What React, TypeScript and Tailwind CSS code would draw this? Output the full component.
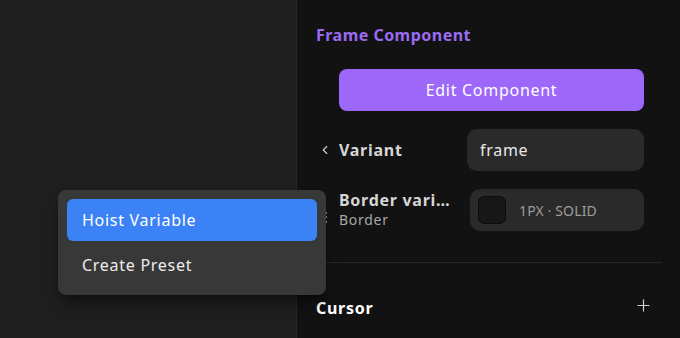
import React from 'react'
import { ChevronLeft, Plus } from 'lucide-react'

const font = { fontFamily: '"Noto Sans", "Open Sans", sans-serif' }

export default function App() {
  return (
    <div
      className="relative flex h-[338px] w-[680px] overflow-hidden bg-[#1e1e1e] tracking-[0.045em]"
      style={font}
    >
      {/* canvas area */}
      <div className="w-[297px] shrink-0 border-r border-[#262626]" />

      {/* properties panel */}
      <div className="flex flex-1 flex-col bg-[#121212] pl-[19px] pr-[18px] pt-[23px]">
        <h2 className="text-[16px] font-bold leading-6 tracking-[0.03em] text-[#9b6cf2]">Frame Component</h2>

        <div className="mt-[22px] flex flex-col gap-[18px] pl-[23px] pr-[18px]">
          <button className="h-[42px] w-full rounded-lg bg-[#9d68f9] text-[16px] text-white">
            Edit Component
          </button>

          <div className="flex h-[42px] items-center">
            <div className="-ml-[19px] flex w-[19px] justify-start">
              <ChevronLeft size={14} strokeWidth={2} className="-ml-[2px] text-[#cfcfcf]" />
            </div>
            <span className="w-[128px] text-[16px] font-bold text-[#d6d6d6]">Variant</span>
            <div className="flex h-full flex-1 items-center rounded-[10px] bg-[#2a2a2a] px-[13px] text-[16px] text-[#e8e8e8]">
              frame
            </div>
          </div>

          <div className="flex h-[42px] items-center">
            <div className="-ml-[19px] flex w-[19px] justify-start pt-[14px]">
              <span className="text-[12px] leading-none text-[#bbbbbb]">⋮</span>
            </div>
            <div className="flex w-[131px] flex-col pr-[14px]">
              <span className="truncate text-[16px] font-bold leading-5 text-[#d6d6d6]">Border variant</span>
              <span className="text-[14px] leading-5 text-[#a8a8a8]">Border</span>
            </div>
            <div className="flex h-full flex-1 items-center gap-[13px] rounded-[10px] bg-[#2a2a2a] px-[8px]">
              <div className="h-[28px] w-[28px] rounded-md border border-[#0c0c0c] bg-[#171717]" />
              <span className="text-[14px] tracking-[0.01em] text-[#9c9c9c]">1PX · SOLID</span>
            </div>
          </div>
        </div>

        <div className="mt-[31px] ml-[10px] h-px bg-[#262626]" />

        <div className="mt-[33px] flex items-center justify-between pr-[9px]">
          <span className="text-[16px] font-bold leading-6 text-white">Cursor</span>
          <Plus size={19} strokeWidth={1.5} className="-mt-[6px] text-[#cfcfcf]" />
        </div>
      </div>

      {/* context menu */}
      <div className="absolute left-[58px] top-[190px] flex w-[268px] flex-col gap-[3px] rounded-lg bg-[#383838] p-[9px] shadow-lg shadow-black/40">
        <div className="flex h-[42px] items-center rounded-md bg-[#3b82f6] px-[15px] text-[16px] text-white">
          Hoist Variable
        </div>
        <div className="flex h-[42px] items-center rounded-md px-[15px] text-[16px] text-[#ececec]">
          Create Preset
        </div>
      </div>
    </div>
  )
}
